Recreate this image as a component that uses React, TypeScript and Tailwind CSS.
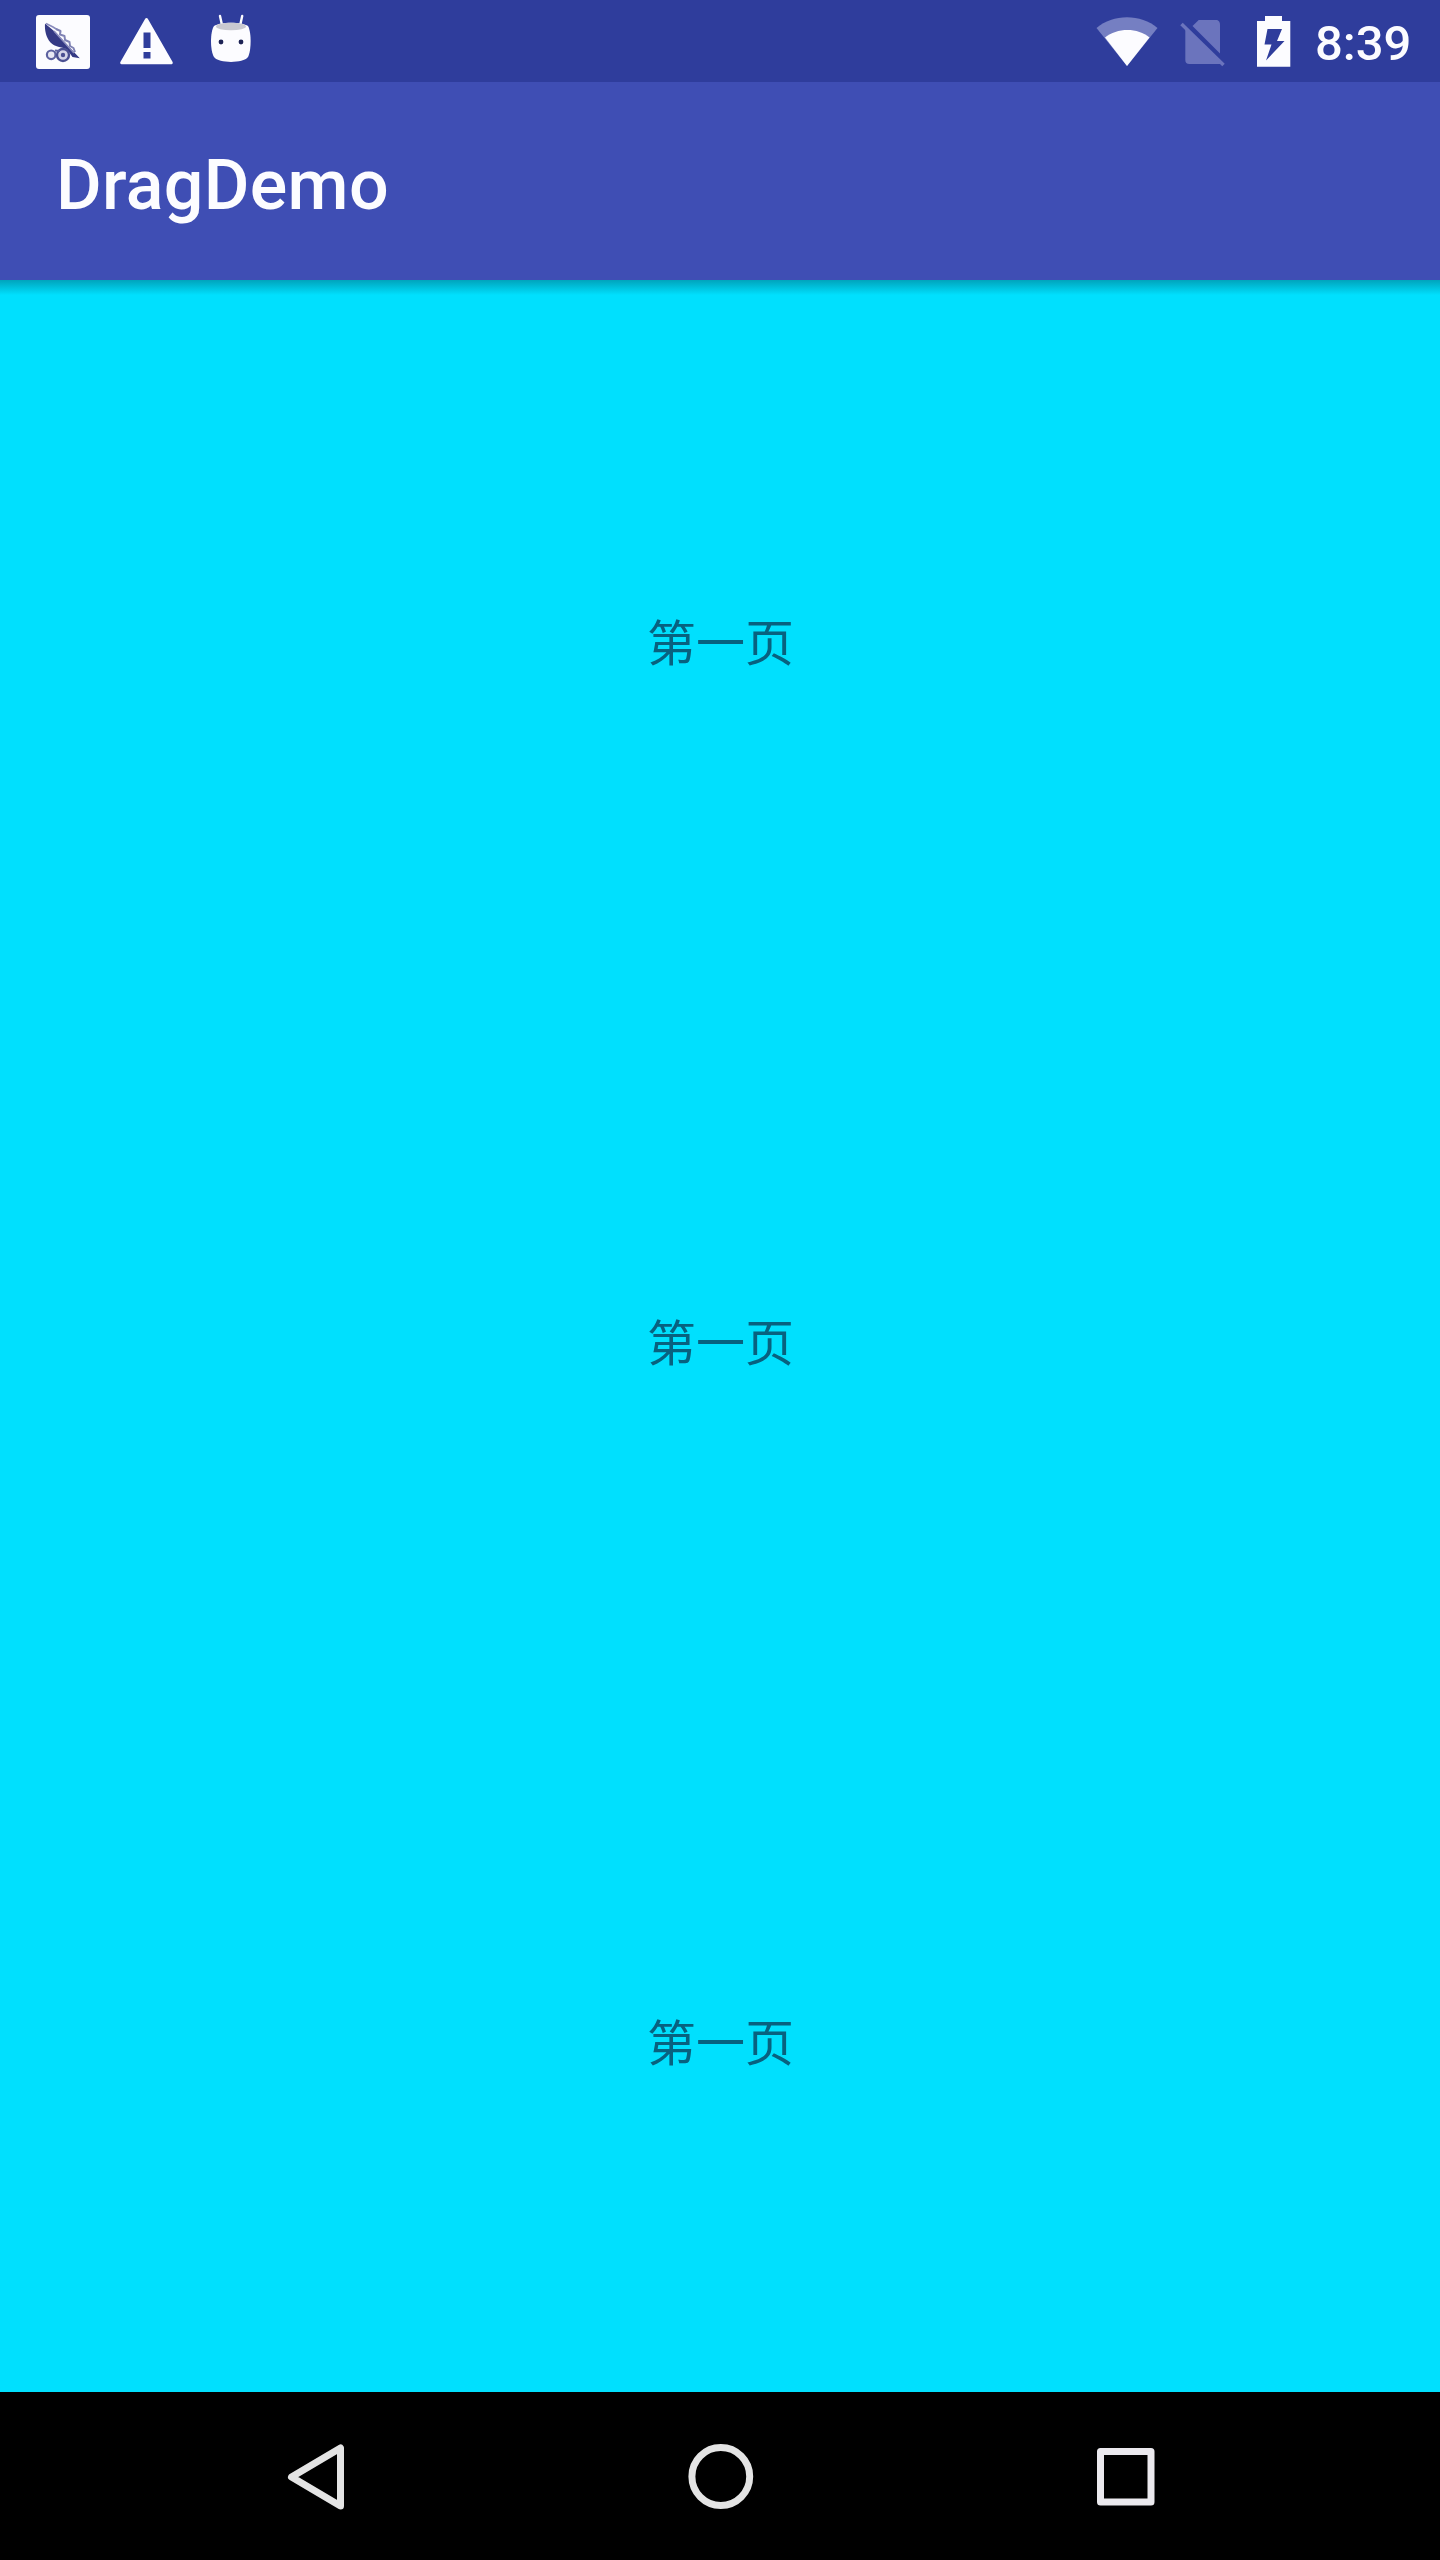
const pages = ["第一页", "第一页", "第一页"];

function CarriageIcon() {
  return (
    <svg width="54" height="54" viewBox="36 15 54 54">
      <rect x="36" y="15" width="54" height="54" rx="3" fill="#fcfcff" />
      <path d="M45 23.500 L54 31 L79.800 58.300 L72.500 57 L67 49.500 C61 46.500 55 47.500 50.500 42.500 C46 37.500 44.500 30 45 23.500Z" fill="#343984" />
      <path d="M46 23.500 L53 27 L57 29.500 M54 31 L74 53" fill="none" stroke="#8a8cbc" strokeWidth="1.600" />
      <path d="M56 29 L60.500 31 L60 34.500 L64.500 36 L65 40 L69.500 42 L70 46 L73.500 48 L75 52" fill="none" stroke="#7f82b4" strokeWidth="2" strokeLinejoin="round" />
      <circle cx="51.200" cy="54.800" r="4.300" fill="#e8e8f4" stroke="#5d62a0" strokeWidth="2.200" />
      <circle cx="63" cy="55" r="6" fill="#d4d5e8" stroke="#4b5092" strokeWidth="2.400" />
      <circle cx="63" cy="55" r="2.200" fill="#4b5092" />
      <path d="M55 50.500L60 51" stroke="#5d62a0" strokeWidth="2" />
    </svg>
  );
}

function WarningIcon() {
  return (
    <svg width="54" height="48" viewBox="120 17 54 48">
      <path
        d="M146.500 19.500 L171.300 62.800 H121.700Z"
        fill="#fcfcff"
        stroke="#fcfcff"
        strokeWidth="3"
        strokeLinejoin="round"
      />
      <path d="M143.500 32.500h7v15.500h-7zM143.500 52h7v6.500h-7z" fill="#2f3d9c" />
    </svg>
  );
}

function RobotIcon() {
  return (
    <svg width="42" height="49" viewBox="210 14 42 49">
      <path d="M220 16 L222.200 26M242.200 16 L240 26" stroke="#fcfcff" strokeWidth="2.400" strokeLinecap="round" />
      <path
        d="M214 26C220 21.500 242 21.500 248 26C251.500 32 251.500 50 248 57C243 63.500 219 63.500 214 57C210 50 210 32 214 26Z"
        fill="#fcfcff"
      />
      <ellipse cx="231" cy="26.500" rx="15" ry="3.800" fill="#c9c9d0" />
      <circle cx="221" cy="42" r="2.400" fill="#1d2355" />
      <circle cx="241" cy="42" r="2.400" fill="#1d2355" />
    </svg>
  );
}

function WifiIcon() {
  return (
    <svg width="64" height="50" viewBox="1095 17 64 50">
      <path d="M1096.500 28C1113 13.500 1141 13.500 1157.500 28L1127 66Z" fill="#757fc2" />
      <path d="M1105 37.500C1117 27.500 1138 27.500 1149.500 37.500L1127 66Z" fill="#fcfcff" />
    </svg>
  );
}

function NoSimIcon() {
  return (
    <svg width="46" height="47" viewBox="1180 20 46 47">
      <path d="M1192.500 26 L1199 19.700 H1215 Q1220 19.700 1220 24.700 V53.500Z" fill="#6b74bd" />
      <path d="M1185.300 28 L1221 64 H1189.300 Q1185.300 64 1185.300 60Z" fill="#6b74bd" />
      <path d="M1181.500 24 L1223.500 65" stroke="#6b74bd" strokeWidth="3.500" />
    </svg>
  );
}

function BatteryIcon() {
  return (
    <svg width="34" height="51" viewBox="1257 16 34 51">
      <path d="M1265 16H1282V21H1290.300V66.700H1257V21H1265Z" fill="#fcfcff" />
      <path d="M1267.500 29H1282L1277 41H1284.500L1266 60.500L1271.500 44.500H1264.500Z" fill="#2f3d9c" />
    </svg>
  );
}

function StatusBar() {
  return (
    <header className="flex h-[82px] shrink-0 items-start bg-[#2f3d9c] text-[#fcfcff]">
      <div className="ml-9 mt-[15px]"><CarriageIcon /></div>
      <div className="ml-[30px] mt-[17px]"><WarningIcon /></div>
      <div className="ml-9 mt-[14px]"><RobotIcon /></div>
      <div className="ml-auto mt-[17px]"><WifiIcon /></div>
      <div className="ml-[21px] mt-5"><NoSimIcon /></div>
      <div className="ml-[31px] mt-4"><BatteryIcon /></div>
      <span className="ml-6 mr-[29px] mt-[15px] w-24 whitespace-nowrap text-[49px] font-medium leading-[58px]">8:39</span>
    </header>
  );
}

function NavigationBar() {
  return (
    <nav className="flex h-[168px] shrink-0 items-center justify-center gap-[338px] bg-black pt-0.5">
      <svg width="67" height="68" viewBox="0 0 67 68" fill="none" stroke="#e4e4e4" strokeWidth="7" strokeLinejoin="round">
        <path d="M9.500 34 L58.500 5 V63Z" />
      </svg>
      <svg width="67" height="68" viewBox="0 0 67 68" fill="none" stroke="#e4e4e4" strokeWidth="7">
        <circle cx="33.800" cy="33.500" r="28.900" />
      </svg>
      <svg width="67" height="68" viewBox="0 0 67 68" fill="none" stroke="#ebe9ee" strokeWidth="7" strokeLinejoin="round">
        <rect x="8.500" y="8.500" width="50.500" height="50.500" />
      </svg>
    </nav>
  );
}

export default function App() {
  return (
    <div className="flex h-[2560px] w-[1440px] flex-col overflow-hidden bg-[#00e0fe] font-['Roboto','Noto_Sans_CJK_SC',sans-serif]">
      <StatusBar />
      <div className="flex h-[198px] shrink-0 items-center bg-[#3f4eb4] pl-14 pt-2">
        <h1 className="text-[70px] font-medium leading-[82px] tracking-[0.3px] text-[#fcfcff]">DragDemo</h1>
      </div>
      <main className="min-h-0 flex-1 overflow-hidden">
        <div className="h-[15px] bg-linear-to-b from-[#00a4bc] to-[#00e0fe]" />
        {pages.map((label, index) => (
          <section key={index} className="flex h-[700px] items-center justify-center pl-px">
            <p className="text-[49px] leading-[58px] text-[#08617f]">{label}</p>
          </section>
        ))}
      </main>
      <NavigationBar />
    </div>
  );
}
